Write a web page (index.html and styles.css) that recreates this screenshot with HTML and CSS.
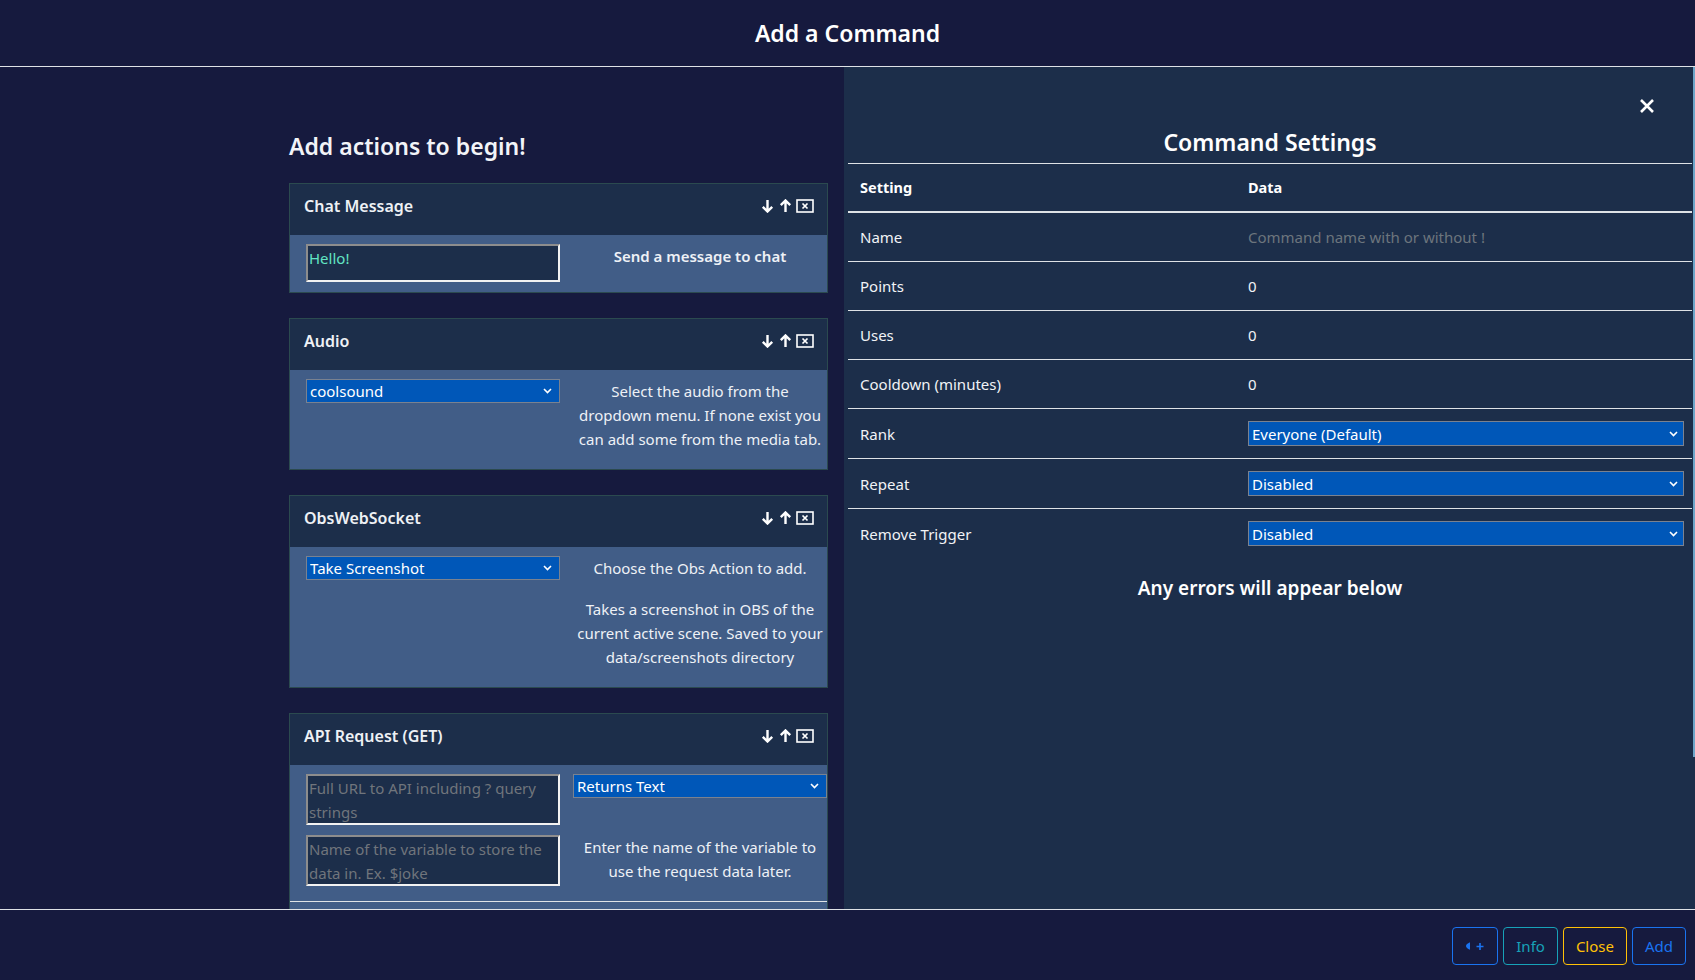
FILE: index.html
```html
<!DOCTYPE html>
<html lang="en">
<head>
<meta charset="utf-8">
<title>Add a Command</title>
<link rel="stylesheet" href="styles.css">
</head>
<body>
<header class="top"><h1>Add a Command</h1></header>
<main class="main">
  <section class="actions">
    <h2 class="actions-title">Add actions to begin!</h2>

    <div class="card">
      <div class="card-head"><span>Chat Message</span>
        <span class="tools">
          <svg class="ic-arrow" width="13" height="14" viewBox="0 0 13 14"><path d="M6.5 1V12.5M1.8 7.8l4.7 4.7 4.7-4.7" fill="none" stroke="#fff" stroke-width="2.4"/></svg>
          <svg class="ic-arrow" width="13" height="14" viewBox="0 0 13 14"><path d="M6.5 13V1.5M1.8 6.2l4.7-4.7 4.7 4.7" fill="none" stroke="#fff" stroke-width="2.4"/></svg>
          <svg class="ic-box" width="18" height="14" viewBox="0 0 18 14"><rect x="1" y="1" width="16" height="12" fill="none" stroke="#fff" stroke-width="1.6"/><path d="M6.5 4.5l5 5M11.5 4.5l-5 5" stroke="#fff" stroke-width="1.7"/></svg>
        </span>
      </div>
      <div class="card-body">
        <textarea class="field short">Hello!</textarea>
        <div class="desc"><p class="strong">Send a message to chat</p></div>
      </div>
    </div>

    <div class="card">
      <div class="card-head"><span>Audio</span>
        <span class="tools">
          <svg class="ic-arrow" width="13" height="14" viewBox="0 0 13 14"><path d="M6.5 1V12.5M1.8 7.8l4.7 4.7 4.7-4.7" fill="none" stroke="#fff" stroke-width="2.4"/></svg>
          <svg class="ic-arrow" width="13" height="14" viewBox="0 0 13 14"><path d="M6.5 13V1.5M1.8 6.2l4.7-4.7 4.7 4.7" fill="none" stroke="#fff" stroke-width="2.4"/></svg>
          <svg class="ic-box" width="18" height="14" viewBox="0 0 18 14"><rect x="1" y="1" width="16" height="12" fill="none" stroke="#fff" stroke-width="1.6"/><path d="M6.5 4.5l5 5M11.5 4.5l-5 5" stroke="#fff" stroke-width="1.7"/></svg>
        </span>
      </div>
      <div class="card-body">
        <div class="select-wrap">
          <select class="select"><option>coolsound</option></select>
          <svg class="chev" width="9" height="6" viewBox="0 0 9 6"><path d="M1 1l3.5 3.5L8 1" fill="none" stroke="#fff" stroke-width="1.6"/></svg>
        </div>
        <div class="desc"><p>Select the audio from the dropdown menu. If none exist you can add some from the media tab.</p></div>
      </div>
    </div>

    <div class="card">
      <div class="card-head"><span>ObsWebSocket</span>
        <span class="tools">
          <svg class="ic-arrow" width="13" height="14" viewBox="0 0 13 14"><path d="M6.5 1V12.5M1.8 7.8l4.7 4.7 4.7-4.7" fill="none" stroke="#fff" stroke-width="2.4"/></svg>
          <svg class="ic-arrow" width="13" height="14" viewBox="0 0 13 14"><path d="M6.5 13V1.5M1.8 6.2l4.7-4.7 4.7 4.7" fill="none" stroke="#fff" stroke-width="2.4"/></svg>
          <svg class="ic-box" width="18" height="14" viewBox="0 0 18 14"><rect x="1" y="1" width="16" height="12" fill="none" stroke="#fff" stroke-width="1.6"/><path d="M6.5 4.5l5 5M11.5 4.5l-5 5" stroke="#fff" stroke-width="1.7"/></svg>
        </span>
      </div>
      <div class="card-body">
        <div class="select-wrap">
          <select class="select"><option>Take Screenshot</option></select>
          <svg class="chev" width="9" height="6" viewBox="0 0 9 6"><path d="M1 1l3.5 3.5L8 1" fill="none" stroke="#fff" stroke-width="1.6"/></svg>
        </div>
        <div class="desc">
          <p class="gap">Choose the Obs Action to add.</p>
          <p>Takes a screenshot in OBS of the current active scene. Saved to your data/screenshots directory</p>
        </div>
      </div>
    </div>

    <div class="card">
      <div class="card-head"><span>API Request (GET)</span>
        <span class="tools">
          <svg class="ic-arrow" width="13" height="14" viewBox="0 0 13 14"><path d="M6.5 1V12.5M1.8 7.8l4.7 4.7 4.7-4.7" fill="none" stroke="#fff" stroke-width="2.4"/></svg>
          <svg class="ic-arrow" width="13" height="14" viewBox="0 0 13 14"><path d="M6.5 13V1.5M1.8 6.2l4.7-4.7 4.7 4.7" fill="none" stroke="#fff" stroke-width="2.4"/></svg>
          <svg class="ic-box" width="18" height="14" viewBox="0 0 18 14"><rect x="1" y="1" width="16" height="12" fill="none" stroke="#fff" stroke-width="1.6"/><path d="M6.5 4.5l5 5M11.5 4.5l-5 5" stroke="#fff" stroke-width="1.7"/></svg>
        </span>
      </div>
      <div class="card-body">
        <textarea class="field tall" placeholder="Full URL to API including ? query strings"></textarea>
        <div class="select-wrap wide">
          <select class="select"><option>Returns Text</option></select>
          <svg class="chev" width="9" height="6" viewBox="0 0 9 6"><path d="M1 1l3.5 3.5L8 1" fill="none" stroke="#fff" stroke-width="1.6"/></svg>
        </div>
        <textarea class="field tall" placeholder="Name of the variable to store the data in. Ex. $joke"></textarea>
        <div class="desc"><p>Enter the name of the variable to use the request data later.</p></div>
      </div>
      <div class="card-more"></div>
    </div>
  </section>

  <section class="settings">
    <div class="close-row">
      <svg width="14" height="14" viewBox="0 0 14 14"><path d="M1 1L13 13M13 1L1 13" stroke="#fff" stroke-width="2.6"/></svg>
    </div>
    <h3 class="settings-title">Command Settings</h3>
    <table class="table">
      <colgroup><col class="c-setting"><col class="c-data"></colgroup>
      <thead><tr><th>Setting</th><th>Data</th></tr></thead>
      <tbody>
        <tr><td>Name</td><td><input class="plain" placeholder="Command name with or without !"></td></tr>
        <tr><td>Points</td><td><input class="plain" value="0"></td></tr>
        <tr><td>Uses</td><td><input class="plain" value="0"></td></tr>
        <tr><td>Cooldown (minutes)</td><td><input class="plain" value="0"></td></tr>
        <tr><td>Rank</td><td class="sel"><div class="select-wrap full"><select class="select tall-sel"><option>Everyone (Default)</option></select><svg class="chev" width="9" height="6" viewBox="0 0 9 6"><path d="M1 1l3.5 3.5L8 1" fill="none" stroke="#fff" stroke-width="1.6"/></svg></div></td></tr>
        <tr><td>Repeat</td><td class="sel"><div class="select-wrap full"><select class="select tall-sel"><option>Disabled</option></select><svg class="chev" width="9" height="6" viewBox="0 0 9 6"><path d="M1 1l3.5 3.5L8 1" fill="none" stroke="#fff" stroke-width="1.6"/></svg></div></td></tr>
        <tr><td>Remove Trigger</td><td class="sel"><div class="select-wrap full"><select class="select tall-sel"><option>Disabled</option></select><svg class="chev" width="9" height="6" viewBox="0 0 9 6"><path d="M1 1l3.5 3.5L8 1" fill="none" stroke="#fff" stroke-width="1.6"/></svg></div></td></tr>
      </tbody>
    </table>
    <p class="errors">Any errors will appear below</p>
  </section>
</main>
<footer class="foot">
  <button class="btn btn-blue btn-icon"><svg width="20" height="12" viewBox="0 0 20 12"><path d="M5 2.2Q1 4 1 6t4 3.8Z" fill="#1a73f0"/><path d="M11.5 6.5h7M15 3v7" stroke="#1a73f0" stroke-width="1.6"/></svg></button>
  <button class="btn btn-info">Info</button>
  <button class="btn btn-warn">Close</button>
  <button class="btn btn-blue">Add</button>
</footer>
</body>
</html>
```
FILE: styles.css
```css
html, body {
  margin: 0;
  padding: 0;
}
body {
  width: 1695px;
  height: 980px;
  overflow: hidden;
  background: #161a3e;
  color: #fff;
  font-family: "Noto Sans", "Open Sans", sans-serif;
}

.top {
  height: 66px;
  border-bottom: 1px solid #dee2e6;
  display: flex;
  align-items: center;
  justify-content: center;
}
.top h1 {
  margin: 0;
  font-size: 23px;
  font-weight: 600;
  line-height: 29px;
}

.main {
  display: flex;
  height: 842px;
  overflow: hidden;
}

.actions {
  width: 844px;
  flex: none;
  box-sizing: border-box;
  padding: 65px 0 0 289px;
}
.actions-title {
  margin: 0 0 22px;
  font-size: 23px;
  font-weight: 600;
  line-height: 29px;
  color: #f2f4f8;
}

.card {
  width: 539px;
  box-sizing: border-box;
  border: 1px solid #2b4a4f;
  margin-bottom: 25px;
}
.card-head {
  height: 51px;
  box-sizing: border-box;
  background: #1c2e4a;
  display: flex;
  align-items: center;
  justify-content: space-between;
  padding: 0 13px 8px 14px;
  font-size: 16px;
  font-weight: 600;
  color: #eef1f5;
}
.tools {
  display: flex;
  align-items: center;
}
.ic-arrow { display: block; margin-right: 5px; }
.ic-box { display: block; margin-left: -1px; }

.card-body {
  background: #415d87;
  display: grid;
  grid-template-columns: 254px 254px;
  column-gap: 13px;
  align-items: start;
  padding: 9px 0 2px 16px;
}
.desc {
  padding: 0 3px;
}
.desc p {
  margin: 0 0 16px;
  text-align: center;
  font-size: 15px;
  line-height: 24px;
  color: #eef1f6;
}
.desc p.gap { margin-bottom: 17px; }
.desc p.strong { font-weight: 600; }

.field {
  display: block;
  width: 254px;
  box-sizing: border-box;
  margin: 0 0 8px;
  background: #1c2e4a;
  border: 2px solid;
  border-color: #8d8d8d #f2f2f2 #f2f2f2 #8d8d8d;
  color: #62e5c3;
  font-family: "Noto Sans", "Open Sans", sans-serif;
  font-size: 15px;
  line-height: 24px;
  padding: 0 1px;
  resize: none;
  overflow: hidden;
}
.field.short { height: 38px; }
.field.tall { height: 51px; margin-bottom: 10px; }
.field::placeholder { color: #70757c; }

.select-wrap {
  position: relative;
  width: 254px;
  margin-bottom: 8px;
}
.select-wrap.full { width: 100%; margin: 0; }
.select {
  appearance: none;
  -webkit-appearance: none;
  display: block;
  width: 100%;
  height: 24px;
  box-sizing: border-box;
  background: #0057b8;
  color: #fff;
  border: 1px solid #7a8290;
  border-radius: 0;
  font-family: "Noto Sans", "Open Sans", sans-serif;
  font-size: 15px;
  line-height: 20px;
  padding: 0 20px 0 3px;
  margin: 0;
}
.select.tall-sel { height: 25px; }
.chev {
  position: absolute;
  right: 8px;
  top: 9px;
}

.card-more {
  height: 20px;
  background: #415d87;
  border-top: 1px solid #dee2e6;
}

.settings {
  flex: 1;
  background: #1c2e4a;
  padding: 0 3px 0 4px;
  position: relative;
}
.settings::after {
  content: "";
  position: absolute;
  right: 0;
  top: 0;
  width: 2px;
  height: 690px;
  background: #6ea6c9;
}
.close-row {
  display: flex;
  justify-content: flex-end;
  padding: 32px 38px 0 0;
}
.close-row svg { display: block; }
.settings-title {
  margin: 15px 0 6px;
  text-align: center;
  font-size: 23px;
  font-weight: 600;
  line-height: 29px;
}

.table {
  width: 844px;
  border-collapse: collapse;
  border-top: 1px solid #dee2e6;
  table-layout: fixed;
}
.c-setting { width: 388px; }
.c-data { width: 456px; }
.table th {
  text-align: left;
  font-weight: 700;
  font-size: 14.5px;
  line-height: 23px;
  padding: 12px;
  border-bottom: 2px solid #dee2e6;
}
.table td {
  font-size: 15px;
  line-height: 24px;
  padding: 12px;
  border-bottom: 1px solid #dee2e6;
  color: #f1f3f6;
}
.table tbody tr:last-child td { border-bottom: none; }
.table td.sel { padding: 12px 8px 12px 12px; }
.table td.sel .chev { right: 6px; top: 10px; }

.plain {
  display: block;
  width: 100%;
  box-sizing: border-box;
  background: transparent;
  border: none;
  padding: 0;
  margin: 0;
  color: #f1f3f6;
  font-family: "Noto Sans", "Open Sans", sans-serif;
  font-size: 15px;
  line-height: 24px;
  height: 24px;
  outline: none;
}
.plain::placeholder { color: #6c757d; }

.errors {
  margin: 18px 0 0;
  text-align: center;
  font-size: 19px;
  font-weight: 600;
  line-height: 24px;
}

.foot {
  height: 71px;
  box-sizing: border-box;
  border-top: 1px solid #dee2e6;
  display: flex;
  justify-content: flex-end;
  align-items: flex-start;
  gap: 5px;
  padding: 17px 9px 0 0;
}
.btn {
  height: 38px;
  box-sizing: border-box;
  padding: 0 12px;
  border: 1px solid;
  border-radius: 4px;
  background: transparent;
  font-family: "Noto Sans", "Open Sans", sans-serif;
  font-size: 15px;
  line-height: 36px;
  display: flex;
  align-items: center;
}
.btn-icon { padding: 0 12px; }
.btn-icon svg { display: block; }
.btn-blue { color: #1a73f0; border-color: #1a73f0; }
.btn-info { color: #17a2b8; border-color: #17a2b8; }
.btn-warn { color: #ffc107; border-color: #ffc107; }
```
